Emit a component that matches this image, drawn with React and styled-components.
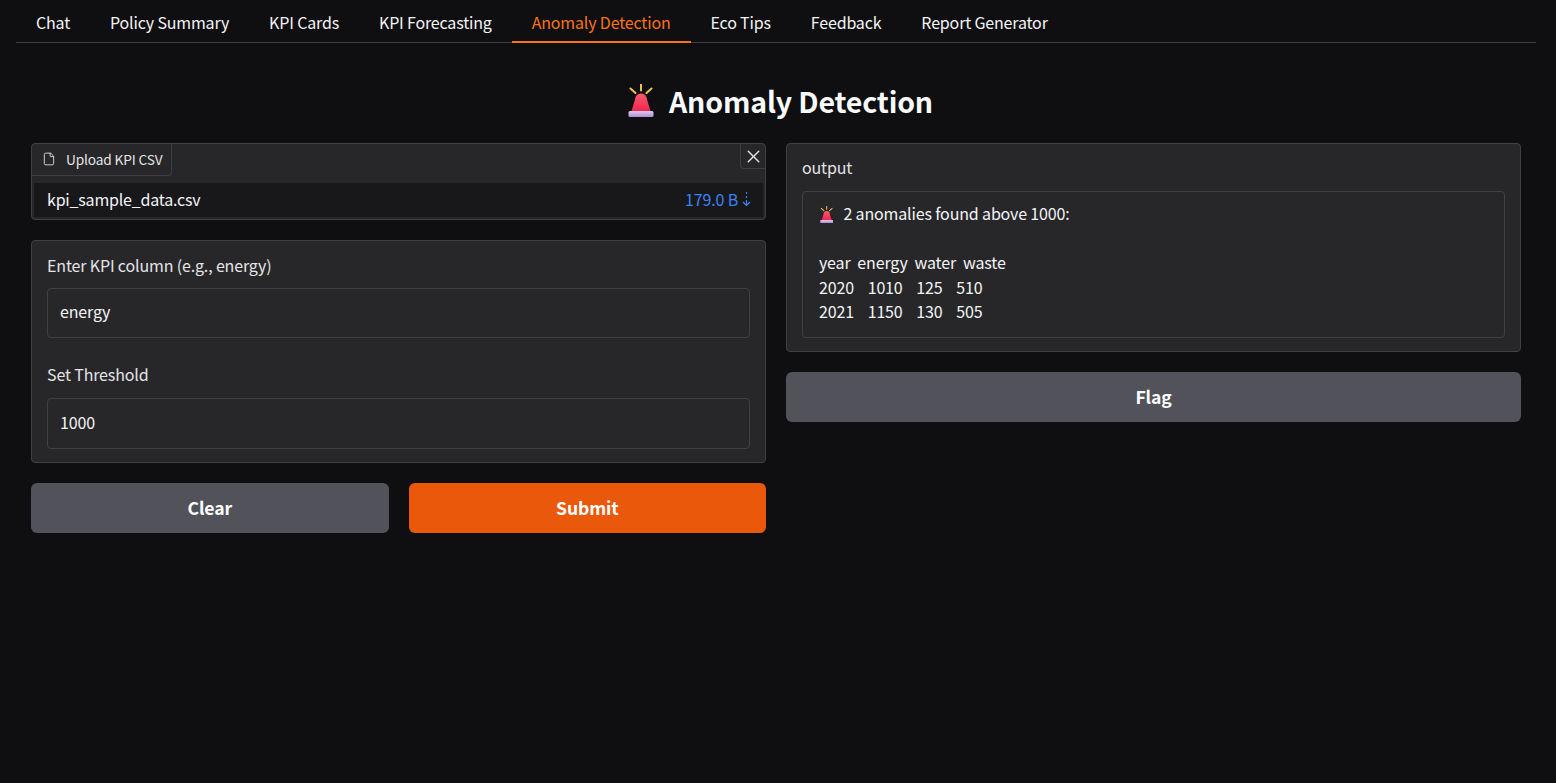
import React from "react";
import styled, { createGlobalStyle } from "styled-components";
import { File, X } from "lucide-react";

const Global = createGlobalStyle`
  html, body {
    margin: 0;
    height: 100%;
    background: #0f0f11;
  }
  body {
    font-family: "Noto Sans CJK SC", "Noto Sans", sans-serif;
    color: #f3f4f6;
    font-size: 16px;
    letter-spacing: -0.15px;
  }
  * {
    box-sizing: border-box;
  }
`;

const Page = styled.div`
  min-height: 783px;
  padding: 0 20px 0 16px;
  overflow: hidden;
`;

const TabBar = styled.nav`
  display: flex;
  height: 43px;
  border-bottom: 1px solid #3f3f46;
`;

const Tab = styled.div`
  height: 43px;
  padding: 0 20px;
  line-height: 44px;
  font-size: 16px;
  letter-spacing: -0.17px;
  color: ${(props) => (props.$active ? "#f97316" : "#f3f4f6")};
  border-bottom: ${(props) => (props.$active ? "2px solid #f97316" : "none")};
`;

const Title = styled.h1`
  display: flex;
  justify-content: center;
  align-items: center;
  gap: 15px;
  height: 44px;
  margin: 35px 0 21px;
  padding-left: 9px;
  font-size: 28.5px;
  font-weight: 600;
  color: #f9fafb;
`;

const Columns = styled.div`
  display: grid;
  grid-template-columns: 1fr 1fr;
  gap: 20px;
  padding: 0 15px;
`;

const Column = styled.div`
  display: flex;
  flex-direction: column;
  gap: 20px;
`;

const Panel = styled.div`
  background: #27272a;
  border: 1px solid #3f3f46;
  border-radius: 4px;
`;

const UploadPanel = styled(Panel)`
  position: relative;
  height: 77px;
`;

const UploadLabel = styled.div`
  display: inline-flex;
  align-items: center;
  gap: 10px;
  height: 32px;
  padding: 0 9px 2px 10px;
  font-size: 13.7px;
  color: #e4e4e7;
  border-right: 1px solid #3f3f46;
  border-bottom: 1px solid #3f3f46;
  border-bottom-right-radius: 4px;
`;

const CloseButton = styled.div`
  position: absolute;
  top: 0;
  right: 0;
  width: 25px;
  height: 25px;
  display: flex;
  align-items: center;
  justify-content: center;
  color: #e4e4e7;
  border-left: 1px solid #3f3f46;
  border-bottom: 1px solid #3f3f46;
  border-bottom-left-radius: 4px;
`;

const FileRow = styled.div`
  display: flex;
  justify-content: space-between;
  align-items: center;
  height: 34px;
  margin: 7px 2px 0;
  padding: 0 12px 2px 13px;
  background: #18181b;
`;

const FileName = styled.span`
  letter-spacing: -0.2px;
`;

const FileSize = styled.span`
  display: flex;
  align-items: center;
  gap: 4px;
  color: #3b82f6;
`;

const FormPanel = styled(Panel)`
  height: 223px;
  padding: 12px 15px 0;
`;

const FieldLabel = styled.div`
  height: 24px;
  line-height: 24px;
  color: #e4e4e7;
`;

const Input = styled.div`
  height: ${(props) => props.$h}px;
  margin: ${(props) => props.$mt}px 0 ${(props) => props.$mb}px;
  padding: 0 12px ${(props) => props.$pb}px;
  display: flex;
  align-items: center;
  background: #27272a;
  border: 1px solid #3f3f46;
  border-radius: 4px;
`;

const ButtonRow = styled.div`
  display: grid;
  grid-template-columns: 1fr 1fr;
  gap: 20px;
`;

const Button = styled.div`
  height: 50px;
  padding-bottom: 1px;
  display: flex;
  align-items: center;
  justify-content: center;
  border-radius: 6px;
  font-size: 17.6px;
  font-weight: 600;
  color: #fff;
  background: ${(props) => (props.$primary ? "#ea580c" : "#52525b")};
`;

const OutputPanel = styled(Panel)`
  height: 209px;
  padding: 11px 15px 0;
`;

const OutputBox = styled.div`
  height: 147px;
  margin-top: 12px;
  padding: 9.4px 16px;
  border: 1px solid #3f3f46;
  border-radius: 4px;
  white-space: pre;
  line-height: 24.4px;
  color: #f3f4f6;
`;

const Siren = ({ height, ...rest }) => (
  <svg width={(height * 26) / 33} height={height} viewBox="0 0 26 33" {...rest}>
    <defs>
      <linearGradient id="sirenBody" x1="0" y1="0" x2="0" y2="1">
        <stop offset="0" stopColor="#fb5a6e" />
        <stop offset="1" stopColor="#f0264f" />
      </linearGradient>
      <linearGradient id="sirenBase" x1="0" y1="0" x2="0" y2="1">
        <stop offset="0" stopColor="#e4c8f0" />
        <stop offset="1" stopColor="#a98fd8" />
      </linearGradient>
    </defs>
    <path d="M13 0.500v6M2.500 4.500l5 4.500M23.500 4.500l-5 4.500" stroke="#f2c14e" strokeWidth="2" strokeLinecap="round" fill="none" />
    <path d="M3.500 27L7 15.500a6 6 0 0 1 12 0L22.500 27z" fill="url(#sirenBody)" />
    <rect x="0.5" y="27" width="25" height="6" rx="1.5" fill="url(#sirenBase)" />
  </svg>
);

const InlineSiren = styled(Siren)`
  vertical-align: -3px;
  margin: 0 10px 0 1px;
`;

const DownloadArrow = () => (
  <svg width="9" height="15" viewBox="0 0 9 15">
    <path d="M4.500 0v2M4.500 4v2M4.500 8v5.500M1 10l3.500 3.500L8 10" stroke="currentColor" strokeWidth="1.2" fill="none" />
  </svg>
);

const tabs = ["Chat", "Policy Summary", "KPI Cards", "KPI Forecasting", "Anomaly Detection", "Eco Tips", "Feedback", "Report Generator"];

export default function App() {
  return (
    <>
      <Global />
      <Page>
        <TabBar>
          {tabs.map((t) => (
            <Tab key={t} $active={t === "Anomaly Detection"}>{t}</Tab>
          ))}
        </TabBar>
        <Title>
          <Siren height={33} />
          Anomaly Detection
        </Title>
        <Columns>
          <Column>
            <UploadPanel>
              <UploadLabel>
                <File size={14} strokeWidth={1.5} />
                Upload KPI CSV
              </UploadLabel>
              <CloseButton><X size={21} strokeWidth={1.6} /></CloseButton>
              <FileRow>
                <FileName>kpi_sample_data.csv</FileName>
                <FileSize>179.0 B<DownloadArrow /></FileSize>
              </FileRow>
            </UploadPanel>
            <FormPanel>
              <FieldLabel>Enter KPI column (e.g., energy)</FieldLabel>
              <Input $h={50} $mt={11} $mb={24} $pb={5}>energy</Input>
              <FieldLabel>Set Threshold</FieldLabel>
              <Input $h={51} $mt={12} $mb={0} $pb={3}>1000</Input>
            </FormPanel>
            <ButtonRow>
              <Button>Clear</Button>
              <Button $primary>Submit</Button>
            </ButtonRow>
          </Column>
          <Column>
            <OutputPanel>
              <FieldLabel>output</FieldLabel>
              <OutputBox>
                <InlineSiren height={17} />
                {"2 anomalies found above 1000:\n\nyear  energy  water  waste\n2020    1010    125    510\n2021    1150    130    505"}
              </OutputBox>
            </OutputPanel>
            <Button>Flag</Button>
          </Column>
        </Columns>
      </Page>
    </>
  );
}
